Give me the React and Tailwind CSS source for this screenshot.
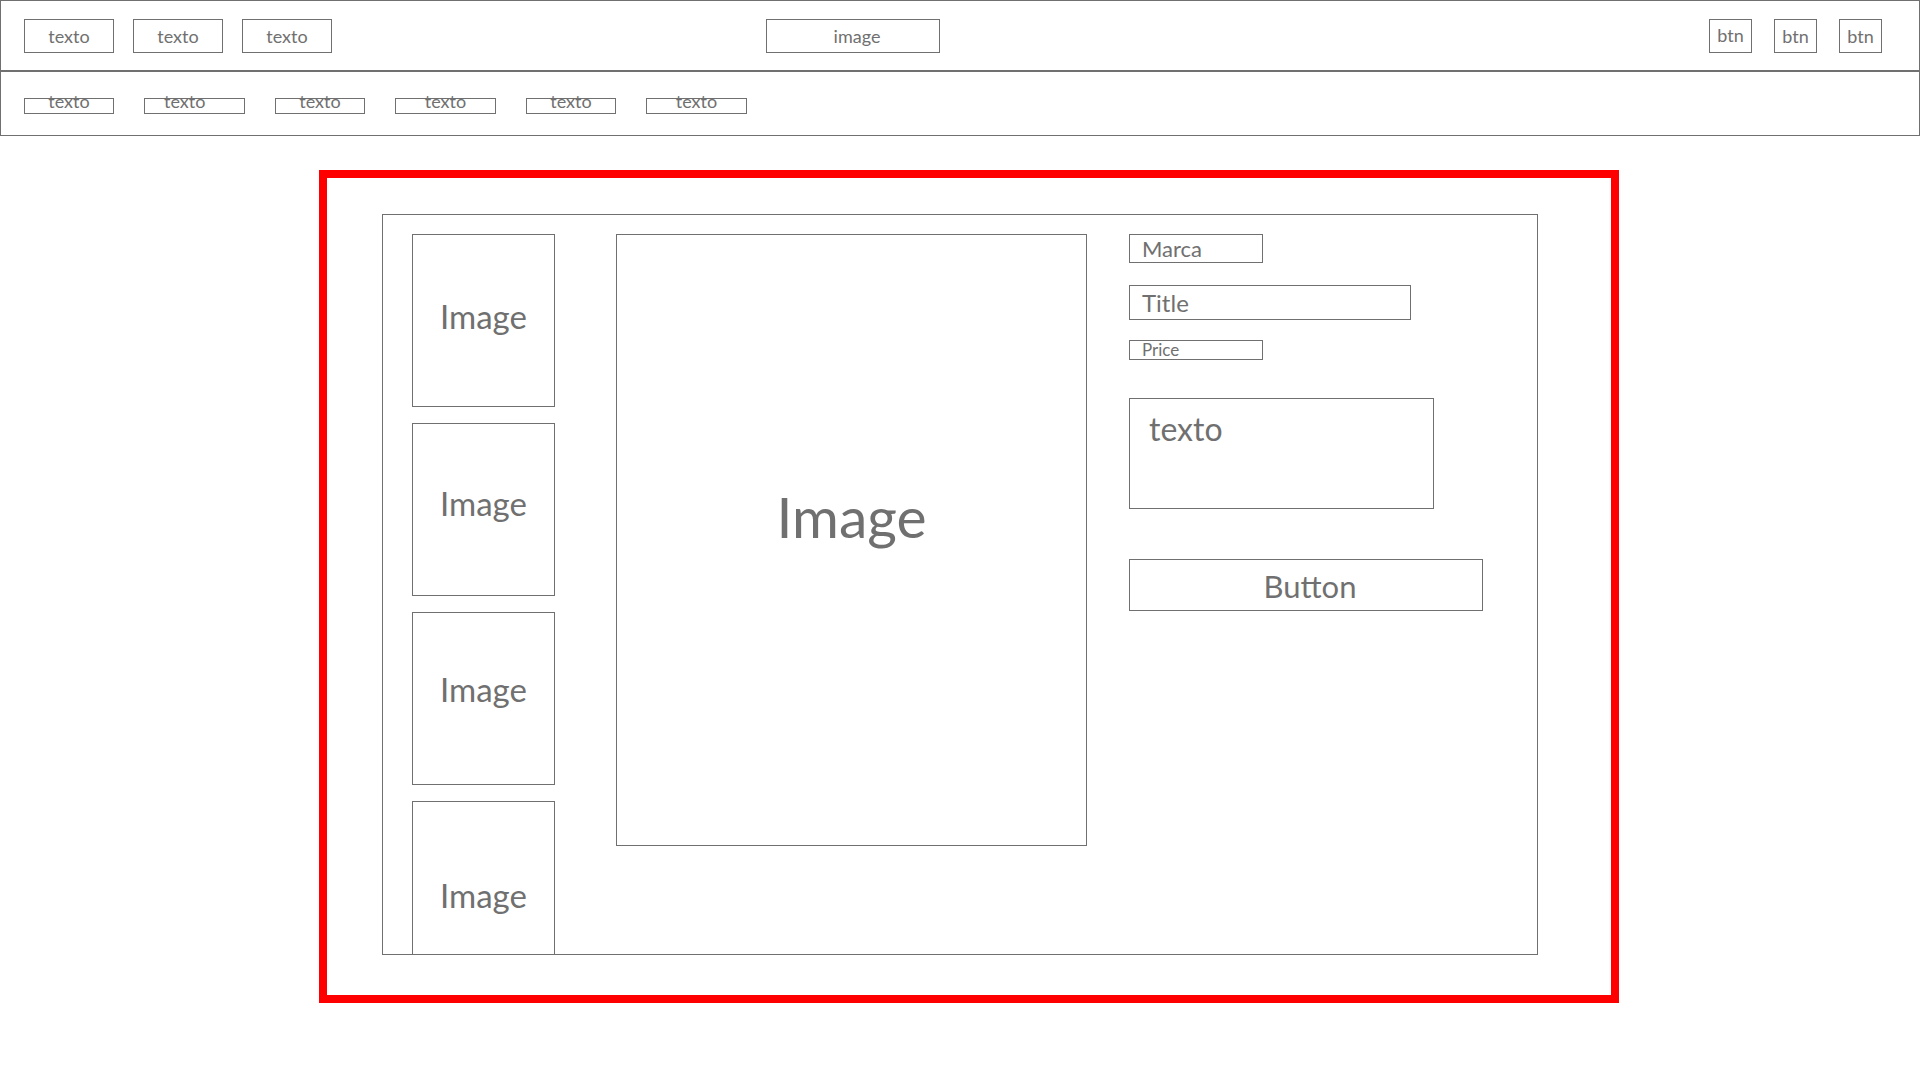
import React from 'react';

const line = "border border-[#707070]";

function TopBox({ children, className = "" }) {
    return (
        <div className={`${line} h-[34px] flex items-center justify-center pt-[2px] text-[18px] ${className}`}>
            {children}
        </div>
    );
}

function NavBox({ children, className = "" }) {
    return (
        <div className={`${line} h-[16px] flex items-start justify-center text-[18px] leading-[4px] ${className}`}>
            <span>{children}</span>
        </div>
    );
}

function Thumb({ className = "" }) {
    return (
        <div className={`${line} w-[143px] h-[173px] shrink-0 flex items-center justify-center text-[33px] ${className}`}>
            Image
        </div>
    );
}

export default function App() {
    return (
        <div className="min-h-screen bg-white font-['Lato',sans-serif] text-[#707070]">

            {/* top bar */}
            <div className={`${line} h-[71px] flex items-center pl-[23px] pr-[37px]`}>
                <div className="flex gap-[19px]">
                    <TopBox className="w-[90px]">texto</TopBox>
                    <TopBox className="w-[90px]">texto</TopBox>
                    <TopBox className="w-[90px]">texto</TopBox>
                </div>
                <TopBox className="w-[174px] ml-[434px] pl-[8px]">image</TopBox>
                <div className="flex gap-[22px] ml-auto">
                    <TopBox className="w-[43px] pt-0 pb-[3px]">btn</TopBox>
                    <TopBox className="w-[43px]">btn</TopBox>
                    <TopBox className="w-[43px]">btn</TopBox>
                </div>
            </div>

            {/* nav bar */}
            <div className={`${line} h-[65px] flex items-start pt-[26px] pl-[23px] gap-[30px]`}>
                <NavBox className="w-[90px]">texto</NavBox>
                <NavBox className="w-[101px] justify-start pl-[19px]">texto</NavBox>
                <NavBox className="w-[90px]">texto</NavBox>
                <NavBox className="w-[101px]">texto</NavBox>
                <NavBox className="w-[90px]">texto</NavBox>
                <NavBox className="w-[101px]">texto</NavBox>
            </div>

            {/* product area */}
            <div className="pt-[34px]">
                <div className="ml-[319px] w-[1300px] h-[833px] border-8 border-[#ff0000] pt-[36px] pl-[55px]">
                    <div className={`${line} w-[1156px] h-[741px] overflow-hidden flex items-start pt-[19px] pl-[29px]`}>
                        <div className="flex flex-col gap-[16px]">
                            <Thumb className="pb-[8px]" />
                            <Thumb className="pb-[12px]" />
                            <Thumb className="pb-[18px]" />
                            <Thumb className="h-[195px] pb-[6px]" />
                        </div>

                        <div className={`${line} w-[471px] h-[612px] ml-[61px] flex items-center justify-center pb-[46px] text-[57px]`}>
                            Image
                        </div>

                        <div className="ml-[42px] flex flex-col items-start">
                            <div className={`${line} w-[134px] h-[29px] flex items-center pl-[12px] text-[22px]`}>Marca</div>
                            <div className={`${line} w-[282px] h-[35px] mt-[22px] flex items-center pl-[12px] text-[24px]`}>Title</div>
                            <div className={`${line} w-[134px] h-[20px] mt-[20px] flex items-center pl-[12px] text-[17px]`}>Price</div>
                            <div className={`${line} w-[305px] h-[111px] mt-[38px] pl-[19px] pt-[10px] text-[32px] leading-tight`}>texto</div>
                            <div className={`${line} w-[354px] h-[52px] mt-[50px] flex items-center justify-center pl-[8px] pt-[2px] text-[31px]`}>Button</div>
                        </div>
                    </div>
                </div>
            </div>
        </div>
    );
}
